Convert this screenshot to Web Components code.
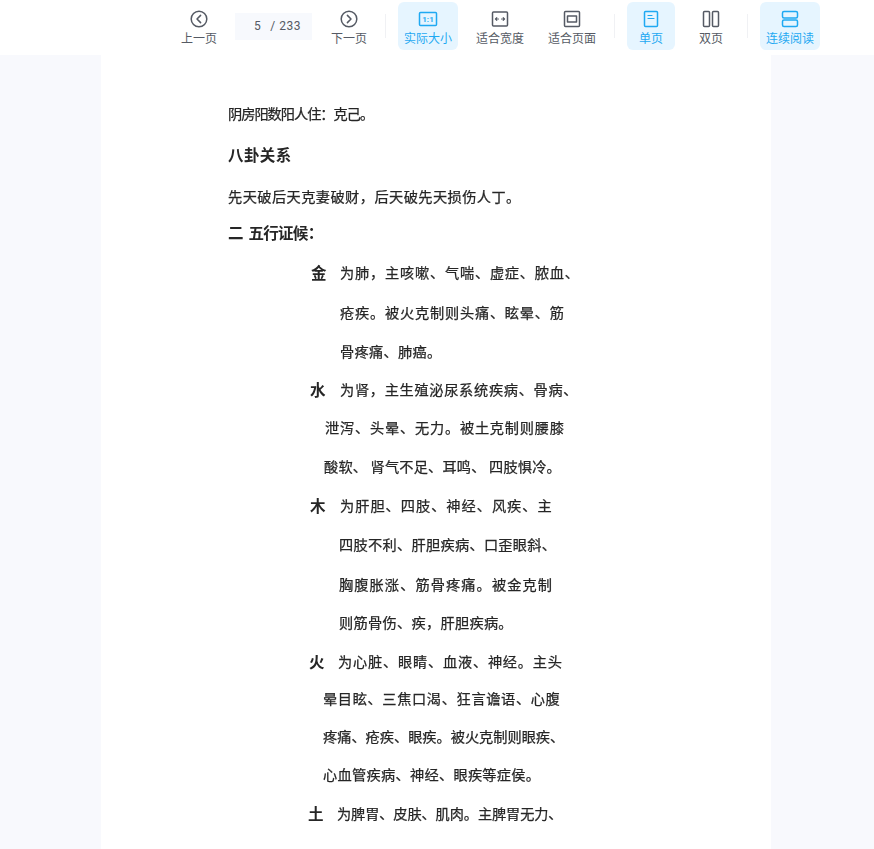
<!DOCTYPE html>
<html lang="zh">
<head>
<meta charset="utf-8">
<title>文档预览</title>
<style>
  html, body { margin: 0; height: 100%; overflow: hidden; }
  body { background: #f8f9fd; font-family: "Noto Sans CJK SC", "Noto Sans", sans-serif; }
</style>
</head>
<body>
<doc-viewer>
  <doc-toolbar slot="bar">
    <tool-button label="上一页"><svg viewBox="0 0 20 20"><circle cx="10" cy="10" r="7.8"/><path d="M11.6 6.4 8 10l3.6 3.6"/></svg></tool-button>
    <page-input current="5" total="233"></page-input>
    <tool-button label="下一页"><svg viewBox="0 0 20 20"><circle cx="10" cy="10" r="7.8"/><path d="M8.4 6.4 12 10l-3.6 3.6"/></svg></tool-button>
    <tool-divider></tool-divider>
    <tool-button label="实际大小" active><svg viewBox="0 0 20 20"><rect x="1.5" y="3.5" width="17" height="13" rx="1"/><text x="10" y="12.7" text-anchor="middle" font-size="8" font-weight="700" font-family="Roboto, sans-serif" fill="currentColor" stroke="none">1:1</text></svg></tool-button>
    <tool-button label="适合宽度"><svg viewBox="0 0 20 20"><rect x="2.5" y="3" width="15" height="14" rx="1"/><path d="M5.5 10h3M11.5 10h3M6.8 8.6 5.4 10l1.4 1.4M13.2 8.6l1.4 1.4-1.4 1.4" stroke-width="1.1"/></svg></tool-button>
    <tool-button label="适合页面"><svg viewBox="0 0 20 20"><rect x="2.5" y="2.5" width="15" height="15" rx="1"/><rect x="5.5" y="7" width="9" height="6"/></svg></tool-button>
    <tool-divider></tool-divider>
    <tool-button label="单页" active><svg viewBox="0 0 20 20"><rect x="3.5" y="2.5" width="13" height="15" rx="1"/><path d="M7 6.5h4M7 9.5h6" stroke-width="1.2"/></svg></tool-button>
    <tool-button label="双页"><svg viewBox="0 0 20 20"><rect x="2.5" y="2.5" width="6" height="15" rx="1"/><rect x="11.5" y="2.5" width="6" height="15" rx="1"/></svg></tool-button>
    <tool-divider></tool-divider>
    <tool-button label="连续阅读" active><svg viewBox="0 0 20 20"><rect x="2.5" y="2.5" width="15" height="6.5" rx="1.5"/><rect x="2.5" y="11" width="15" height="6.5" rx="1.5"/></svg></tool-button>
  </doc-toolbar>

  <scan-page>
    <scan-line x="127" top="47" size="13.2">阴房阳数阳人住：克己。</scan-line>
    <scan-line x="127" gap="18" size="15.9" bold>八卦关系</scan-line>
    <scan-line x="127" gap="19" size="14.65">先天破后天克妻破财，后天破先天损伤人丁。</scan-line>
    <scan-line x="127" gap="13" size="14.8" bold>二&nbsp;&nbsp;五行证候：</scan-line>
    <scan-line x="210" gap="17" size="15" key="金" keyw="29">为肺，主咳嗽、气喘、虚症、脓血、</scan-line>
    <scan-line x="239" gap="17" size="15">疮疾。被火克制则头痛、眩晕、筋</scan-line>
    <scan-line x="239" gap="16" size="14.5">骨疼痛、肺癌。</scan-line>
    <scan-line x="209" gap="15" size="14.9" key="水" keyw="30">为肾，主生殖泌尿系统疾病、骨病、</scan-line>
    <scan-line x="224" gap="15" size="15">泄泻、头晕、无力。被土克制则腰膝</scan-line>
    <scan-line x="223" gap="16" size="14.4">酸软、 肾气不足、耳鸣、 四肢惧冷。</scan-line>
    <scan-line x="209" gap="16" size="15.2" key="木" keyw="30">为肝胆、四肢、神经、风疾、主</scan-line>
    <scan-line x="238" gap="16" size="14.5">四肢不利、肝胆疾病、口歪眼斜、</scan-line>
    <scan-line x="238" gap="17" size="15.3">胸腹胀涨、筋骨疼痛。被金克制</scan-line>
    <scan-line x="238" gap="15" size="14.5">则筋骨伤、疾，肝胆疾病。</scan-line>
    <scan-line x="208" gap="16" size="15" key="火" keyw="29">为心脏、眼睛、血液、神经。主头</scan-line>
    <scan-line x="222" gap="14" size="14.85">晕目眩、三焦口渴、狂言谵语、心腹</scan-line>
    <scan-line x="222" gap="15" size="14.2">疼痛、疮疾、眼疾。被火克制则眼疾、</scan-line>
    <scan-line x="222" gap="15" size="14.5">心血管疾病、神经、眼疾等症侯。</scan-line>
    <scan-line x="207" gap="16" size="14.1" key="土" keyw="29">为脾胃、皮肤、肌肉。主脾胃无力、</scan-line>
  </scan-page>
</doc-viewer>

<script>
class DocViewer extends HTMLElement {
  constructor() {
    super();
    this.attachShadow({ mode: 'open' });
    this.shadowRoot.innerHTML = `
      <style>
        :host { display: flex; flex-direction: column; height: 100vh; }
        .scroll { flex: 1; display: flex; padding-left: 101px; overflow: hidden; }
      </style>
      <slot name="bar"></slot>
      <div class="scroll"><slot></slot></div>
    `;
  }
}

class DocToolbar extends HTMLElement {
  constructor() {
    super();
    this.attachShadow({ mode: 'open' });
    this.shadowRoot.innerHTML = `
      <style>
        :host {
          display: flex;
          align-items: center;
          gap: 12px;
          height: 55px;
          padding: 0 0 3px 175px;
          box-sizing: border-box;
          background: #fff;
        }
      </style>
      <slot></slot>
    `;
  }
}

class ToolButton extends HTMLElement {
  constructor() {
    super();
    this.attachShadow({ mode: 'open' });
  }

  connectedCallback() {
    this.shadowRoot.innerHTML = `
      <style>
        :host {
          display: flex;
          flex-direction: column;
          align-items: center;
          justify-content: flex-start;
          box-sizing: border-box;
          min-width: 48px;
          height: 48px;
          padding: 7px 6px 0;
          border-radius: 6px;
          font-size: 12px;
          line-height: 17px;
          color: #555a64;
          white-space: nowrap;
        }
        :host([active]) { background: #e6f5ff; color: #1fa9f2; }
        ::slotted(svg) {
          width: 20px;
          height: 20px;
          fill: none;
          stroke: currentColor;
          stroke-width: 1.5;
          stroke-linecap: round;
          stroke-linejoin: round;
        }
      </style>
      <slot></slot>
      <span>${this.getAttribute('label')}</span>
    `;
  }
}

class PageInput extends HTMLElement {
  constructor() {
    super();
    this.attachShadow({ mode: 'open' });
  }

  connectedCallback() {
    this.shadowRoot.innerHTML = `
      <style>
        :host {
          display: flex;
          align-items: center;
          box-sizing: border-box;
          width: 77px;
          height: 27px;
          margin-right: 1px;
          padding-left: 19px;
          background: #f7f9fd;
          font-family: Roboto, "Noto Sans", sans-serif;
          font-size: 12px;
          letter-spacing: 0.5px;
          color: #555a64;
        }
        .total { margin-left: 9px; }
      </style>
      <span>${this.getAttribute('current')}</span>
      <span class="total">/ ${this.getAttribute('total')}</span>
    `;
  }
}

class ToolDivider extends HTMLElement {
  constructor() {
    super();
    this.attachShadow({ mode: 'open' });
    this.shadowRoot.innerHTML = `
      <style>
        :host { display: block; width: 1px; height: 24px; background: #f0f1f4; }
      </style>
    `;
  }
}

class ScanPage extends HTMLElement {
  constructor() {
    super();
    this.attachShadow({ mode: 'open' });
    this.shadowRoot.innerHTML = `
      <style>
        :host {
          display: block;
          width: 670px;
          box-sizing: border-box;
          background: #fff;
          color: #262626;
          font-family: "Noto Sans CJK SC", "Noto Sans", sans-serif;
        }
      </style>
      <slot></slot>
    `;
  }
}

class ScanLine extends HTMLElement {
  constructor() {
    super();
    this.attachShadow({ mode: 'open' });
  }

  connectedCallback() {
    const size = parseFloat(this.getAttribute('size')) || 14;
    const bold = this.hasAttribute('bold');
    // every scanned line has its own pitch, so spacing comes from the size attr
    const base = bold ? 15.5 : 14.2;
    const key = this.getAttribute('key');
    const keyw = this.getAttribute('keyw') || 0;
    const marginTop = this.getAttribute('top') || this.getAttribute('gap') || 0;
    const keyHtml = key ? `<span class="key" style="width:${keyw}px">${key}</span>` : '';
    this.shadowRoot.innerHTML = `
      <style>
        :host {
          display: flex;
          align-items: center;
          height: 23px;
          padding-left: ${this.getAttribute('x')}px;
          margin-top: ${marginTop}px;
          font-size: ${base}px;
          font-weight: ${bold ? 700 : 400};
          line-height: 23px;
          -webkit-text-stroke: ${bold ? 0 : 0.25}px #262626;
          filter: blur(0.25px);
        }
        .text { white-space: pre; letter-spacing: ${(size - base).toFixed(2)}px; }
        .key { font-size: 15.5px; font-weight: 700; flex: none; -webkit-text-stroke: 0; }
      </style>
      ${keyHtml}<span class="text"><slot></slot></span>
    `;
  }
}

customElements.define('doc-viewer', DocViewer);
customElements.define('doc-toolbar', DocToolbar);
customElements.define('tool-button', ToolButton);
customElements.define('page-input', PageInput);
customElements.define('tool-divider', ToolDivider);
customElements.define('scan-page', ScanPage);
customElements.define('scan-line', ScanLine);
</script>
</body>
</html>
